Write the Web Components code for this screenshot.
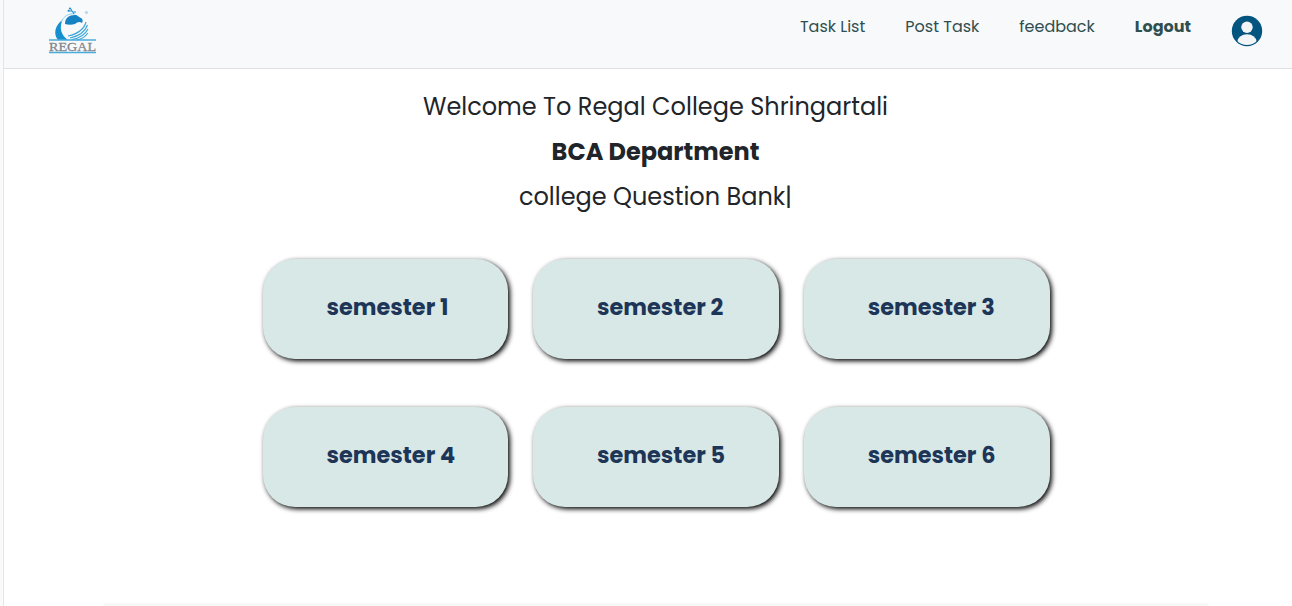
<!DOCTYPE html>
<html lang="en">
<head>
<meta charset="utf-8">
<title>Regal College Question Bank</title>
<style>
html,body{margin:0;height:100%;overflow:hidden;background:#fff}
body{font-family:Poppins,Inter,sans-serif;color:#212529}
</style>
</head>
<body>
<regal-page>
  <regal-header slot="header">
    <nav-link>Task List</nav-link>
    <nav-link>Post Task</nav-link>
    <nav-link>feedback</nav-link>
    <nav-link style="font-weight:700">Logout</nav-link>
  </regal-header>
  <regal-hero></regal-hero>
  <semester-grid>
    <semester-card>semester 1</semester-card>
    <semester-card>semester 2</semester-card>
    <semester-card>semester 3</semester-card>
    <semester-card>semester 4</semester-card>
    <semester-card>semester 5</semester-card>
    <semester-card>semester 6</semester-card>
  </semester-grid>
</regal-page>
<script>
function define(name, html) {
  const t = document.createElement('template');
  t.innerHTML = html;
  customElements.define(name, class extends HTMLElement {
    constructor() {
      super();
      this.attachShadow({mode: 'open'}).append(t.content.cloneNode(true));
    }
  });
}

define('regal-page', `
<style>
:host{display:flex;height:100vh;box-sizing:border-box;overflow:hidden}
.edge{width:3px;flex:none;background:#fafafa;border-right:1px solid #e6e6e6}
.main{flex:1;display:flex;flex-direction:column;min-width:0}
.foot{height:3px;margin:auto 83px 0 99px;background:#f8f8f8;border-radius:3px 3px 0 0}
</style>
<div class="edge"></div>
<div class="main"><slot name="header"></slot><slot></slot><div class="foot"></div></div>`);

define('regal-logo', `
<style>:host{display:block;width:50px;height:50px}svg{display:block}text{font-family:"Liberation Serif",serif}</style>
<svg width="50" height="50" viewBox="0 0 50 50" fill="none">
  <path d="M14.5 13C7 18 5 27 10 33H20C13 28 11 21 14.5 13Z" fill="#168fcf"/>
  <path d="M17 17C17 11 21 8 27 8C30 8 30 10 33 11C35 12 35 14 34 16C32 14 29 15 27 17C24 18 20 18 17 17Z" fill="#1583c3"/>
  <path d="M13 15C16 9 21 6 27 7" stroke="#8fcdec" stroke-width="1"/>
  <path d="M26 7L24 4L21 4M24 4L23 2M25 5L28 5" stroke="#168fcf" stroke-width="1"/>
  <circle cx="20.5" cy="3.8" r="1" fill="#168fcf"/><circle cx="22" cy="1.5" r="1.1" fill="#168fcf"/>
  <path d="M38 15C36 23 29 27 20 29M39.5 18C37 25 31 29 22 31M40 22C37 28 32 31 24 32.5M40 26C37 30 34 32 29 33" stroke="#3ba5da" stroke-width="1.1"/>
  <circle cx="38.5" cy="5.5" r="1.1" fill="#b8def0" stroke="#8ac9e8" stroke-width=".7"/>
  <path d="M1 33H48M1 45.5H48" stroke="#48acdc" stroke-width="1.3"/>
  <text x="1" y="44" font-size="13.5" textLength="47" lengthAdjust="spacingAndGlyphs" fill="#85888b" stroke="#85888b" stroke-width=".3">REGAL</text>
</svg>`);

define('user-avatar', `
<style>:host{display:block;width:32px;height:32px}svg{display:block}</style>
<svg width="32" height="32" viewBox="0 0 32 32">
  <defs><clipPath id="c"><circle cx="16" cy="16" r="14"/></clipPath></defs>
  <circle cx="16" cy="16" r="15.2" fill="#03557f"/>
  <g fill="#f3f4f5" clip-path="url(#c)"><circle cx="16" cy="12.2" r="5.7"/><ellipse cx="16" cy="27" rx="9.7" ry="7.8"/></g>
</svg>`);

define('nav-link', `
<style>:host{display:block;white-space:nowrap}</style><slot></slot>`);

define('regal-header', `
<style>
:host{display:flex;flex:none;box-sizing:border-box;height:69px;background:#f8f9fb;border-bottom:1px solid #dee2e6;padding:0 29px 0 44px;justify-content:space-between;align-items:flex-start}
regal-logo{margin-top:7px}
nav{display:flex;gap:40px;color:#2f4f4f;font-size:16px;line-height:24px;padding-top:15px}
</style>
<regal-logo></regal-logo>
<nav><slot></slot><user-avatar></user-avatar></nav>`);

define('regal-hero', `
<style>
:host{display:flex;flex:none;flex-direction:column;align-items:center;padding:20px 0 0 15px;font-size:24px;line-height:36px;gap:9px}
.b{font-weight:700}
</style>
<div>Welcome To Regal College Shringartali</div>
<div class="b">BCA Department</div>
<div>college Question Bank|</div>`);

define('semester-grid', `
<style>:host{display:grid;flex:none;grid-template-columns:repeat(3,245.6px);grid-auto-rows:100px;gap:48px 25px;padding:44px 0 0 258.9px}</style>
<slot></slot>`);

define('semester-card', `
<style>
:host{display:flex;align-items:center;box-sizing:border-box;padding:0 0 4px 63.6px;border-radius:32px;background:#d8e8e6;box-shadow:2px 2px 5px #000;color:#1d3557;font-size:22.4px;font-weight:700;line-height:32px}
</style>
<span><slot></slot></span>`);
</script>
</body>
</html>
